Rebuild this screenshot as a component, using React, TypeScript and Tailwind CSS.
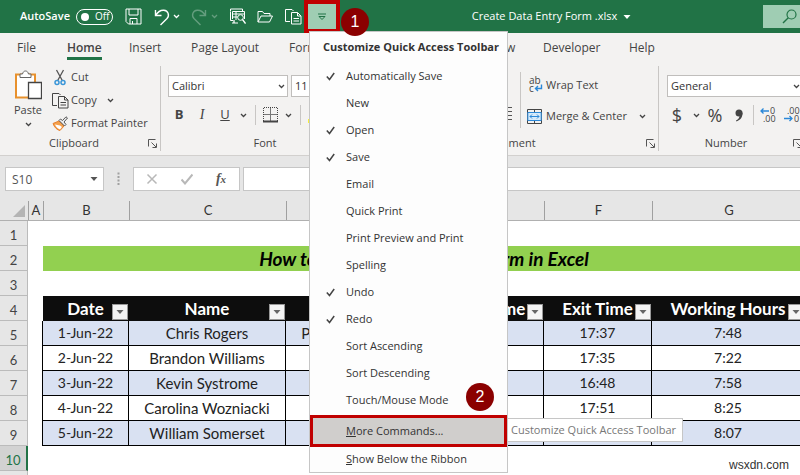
import { useState } from "react";
import type { ReactNode } from "react";

type MenuEntry = { label: string; checked?: boolean };

const menuEntries: MenuEntry[] = [
  { label: "Automatically Save", checked: true },
  { label: "New" },
  { label: "Open", checked: true },
  { label: "Save", checked: true },
  { label: "Email" },
  { label: "Quick Print" },
  { label: "Print Preview and Print" },
  { label: "Spelling" },
  { label: "Undo", checked: true },
  { label: "Redo", checked: true },
  { label: "Sort Ascending" },
  { label: "Sort Descending" },
  { label: "Touch/Mouse Mode" },
];

const tabs = [
  { label: "File", width: "w-[50px]" },
  { label: "Home", width: "w-[62px]" },
  { label: "Insert", width: "w-[62px]" },
  { label: "Page Layout", width: "w-[98px]" },
  { label: "Formulas", width: "w-[80px]" },
  { label: "Data", width: "w-[54px]" },
  { label: "Review", width: "w-[66px]" },
  { label: "View", width: "w-[54px]" },
  { label: "Developer", width: "w-[86px]" },
  { label: "Help", width: "w-[54px]" },
];

const columns = [
  { letter: "B", title: "Date" },
  { letter: "C", title: "Name" },
  { letter: "D", title: "Designation" },
  { letter: "E", title: "Entry Time" },
  { letter: "F", title: "Exit Time" },
  { letter: "G", title: "Working Hours" },
];

const records = [
  ["1-Jun-22", "Chris Rogers", "Project Manager", "9:49", "17:37", "7:48"],
  ["2-Jun-22", "Brandon Williams", "Accountant", "10:13", "17:35", "7:22"],
  ["3-Jun-22", "Kevin Systrome", "Developer", "8:50", "16:48", "7:58"],
  ["4-Jun-22", "Carolina Wozniacki", "Designer", "9:26", "17:51", "8:25"],
  ["5-Jun-22", "William Somerset", "Analyst", "9:10", "17:17", "8:07"],
];

export default function App() {
  return (
    <div className="relative flex h-screen flex-col overflow-hidden bg-white font-['Open_Sans',sans-serif] text-[11px] text-[#444]">
      <TitleBar />
      <Tabs />
      <Ribbon />
      <FormulaBar />
      <Sheet />
      <span className="absolute right-[11px] bottom-[2px] font-['Liberation_Sans',sans-serif] text-xs leading-4 text-[#333]">
        wsxdn.com
      </span>
    </div>
  );
}

function TitleBar() {
  const [autoSave, setAutoSave] = useState(false);

  return (
    <header className="flex h-[33px] shrink-0 items-center bg-[#217346] text-white">
      <label className="flex items-center gap-[7px] pl-5">
        <span className="w-[49px] font-semibold whitespace-nowrap">AutoSave</span>
        <input
          type="checkbox"
          className="sr-only"
          checked={autoSave}
          onChange={(e) => setAutoSave(e.target.checked)}
        />
        <span className="flex h-4 w-[37px] items-center gap-[6px] rounded-full border border-white pl-1 text-[10px]">
          <span className="h-2 w-2 rounded-full bg-white" />
          {autoSave ? "On" : "Off"}
        </span>
      </label>
      <div className="flex flex-1 items-center pl-3">
        <button aria-label="Save" className="w-[29px]">
          <SaveIcon />
        </button>
        <button aria-label="Undo" className="w-[19px]">
          <UndoIcon />
        </button>
        <button aria-label="Undo history" className="w-[18px]">
          <Chevron />
        </button>
        <button aria-label="Redo" className="w-5 opacity-30" disabled>
          <UndoIcon className="-scale-x-100" />
        </button>
        <button aria-label="Redo history" className="w-[18px] opacity-30" disabled>
          <Chevron />
        </button>
        <button aria-label="Print preview" className="w-[28px]">
          <PreviewIcon />
        </button>
        <button aria-label="Open" className="w-[28px]">
          <FolderIcon />
        </button>
        <button aria-label="Copy" className="w-[19px]">
          <CopyIcon />
        </button>
        <QuickAccess />
        <h1 className="flex flex-1 items-center justify-center gap-[6px] whitespace-nowrap">
          Create Data Entry Form .xlsx
          <Triangle className="text-white" />
        </h1>
      </div>
      <button
        aria-label="Search"
        className="flex h-[23px] w-[37px] items-center justify-center bg-[#9fcdb3] pl-4 text-[#217346]"
      >
        <svg width="15" height="15" viewBox="0 0 15 15" fill="none" stroke="currentColor">
          <circle cx="9.5" cy="5.5" r="4.5" strokeWidth="1.2" />
          <path d="M6.3 8.7 1 14" strokeWidth="1.4" />
        </svg>
      </button>
    </header>
  );
}

function QuickAccess() {
  return (
    <div className="relative z-10">
      <button
        aria-label="Customize Quick Access Toolbar"
        className="flex h-[33px] w-9 items-center justify-center border-4 border-[#c00000] bg-[#9fcdb3] text-[#217346]"
      >
        <svg width="8" height="8" viewBox="0 0 8 8" fill="none" stroke="currentColor">
          <path d="M0 1h8M1 3.5h6L4 6.5z" />
        </svg>
      </button>
      <div
        role="menu"
        className="absolute top-[31px] left-[5px] w-[199px] border border-[#c6c6c6] bg-[#fdfdfd] text-[#333]"
      >
        <h2 className="h-[31px] pl-[13px] leading-[30px] font-bold whitespace-nowrap">
          Customize Quick Access Toolbar
        </h2>
        {menuEntries.map((entry) => (
          <button
            key={entry.label}
            role="menuitemcheckbox"
            aria-checked={!!entry.checked}
            className="flex h-[27px] w-full items-center"
          >
            <span className="w-9 pl-4">{entry.checked && <CheckIcon />}</span>
            {entry.label}
          </button>
        ))}
        <div className="relative pt-px">
          <button
            role="menuitem"
            className="h-8 w-full border-[3px] border-[#c00000] bg-[#d0cecc] pl-[33px] text-left"
          >
            <u>M</u>ore Commands...
          </button>
          <Badge className="-top-[31px] left-[156px]">2</Badge>
          <div
            role="tooltip"
            className="absolute top-1 left-full h-6 w-[176px] border border-[#c6c6c6] bg-white pl-[3px] leading-[22px] whitespace-nowrap text-[#777]"
          >
            Customize Quick Access Toolbar
          </div>
        </div>
        <button role="menuitem" className="block h-[25px] w-full pl-9 text-left">
          <u>S</u>how Below the Ribbon
        </button>
      </div>
      <Badge className="top-2 left-[37px]">1</Badge>
    </div>
  );
}

function Badge({ className, children }: { className: string; children: ReactNode }) {
  return (
    <span
      className={`absolute flex h-7 w-7 items-center justify-center rounded-full bg-[#8b0000] font-['Liberation_Sans',sans-serif] text-base text-white ${className}`}
    >
      {children}
    </span>
  );
}

function Tabs() {
  return (
    <nav className="flex h-[33px] shrink-0 bg-[#f3f2f1] pl-[17px] text-xs">
      {tabs.map((tab) => (
        <a key={tab.label} href="#" className={`shrink-0 ${tab.width}`}>
          <span
            className={
              tab.label === "Home"
                ? "inline-block h-[27px] border-b-[3px] border-[#217346] leading-[30px] font-semibold"
                : "inline-block h-[27px] leading-[30px] whitespace-nowrap"
            }
          >
            {tab.label}
          </span>
        </a>
      ))}
    </nav>
  );
}

function Group({
  label,
  width,
  launcher,
  children,
}: {
  label: string;
  width: string;
  launcher?: boolean;
  children: ReactNode;
}) {
  return (
    <section className={`flex shrink-0 flex-col border-r border-[#c8c6c4] ${width}`}>
      <div className="h-[73px]">{children}</div>
      <div className="flex items-center pr-[3px] leading-4">
        <span className="flex-1 text-center">{label}</span>
        {launcher && (
          <button aria-label={`${label} settings`}>
            <LauncherIcon />
          </button>
        )}
      </div>
    </section>
  );
}

function Ribbon() {
  return (
    <div className="flex h-[90px] shrink-0 border-b border-[#d2d0ce] bg-[#f3f2f1] pb-1">
      <Group label="Clipboard" width="w-[161px]" launcher>
        <div className="flex">
          <button className="flex w-[52px] flex-col items-center pt-1 pl-1">
            <PasteIcon />
            <span className="mt-px leading-4">Paste</span>
            <Chevron className="mt-1" />
          </button>
          <div className="flex flex-col items-start">
            <button className="flex h-[23px] items-center">
              <CutIcon />
              <span className="pl-[2px]">Cut</span>
            </button>
            <button className="flex h-[23px] items-center">
              <CopyIcon className="text-[#444]" />
              <span className="pr-[10px] pl-[2px]">Copy</span>
              <Chevron />
            </button>
            <button className="flex h-[23px] items-center whitespace-nowrap">
              <BrushIcon />
              <span className="pl-[2px]">Format Painter</span>
            </button>
          </div>
        </div>
      </Group>

      <Group label="Font" width="w-[212px]">
        <div className="flex gap-[3px] pt-[9px] pl-[7px]">
          <SelectBox label="Font name" value="Calibri" width="w-[120px]" />
          <SelectBox label="Font size" value="11" width="w-12" />
        </div>
        <div className="mt-2 flex h-5 items-center pl-[7px]">
          <button className="w-[22px] text-[13px] font-bold">B</button>
          <button className="w-6 font-['Liberation_Serif',serif] text-sm italic">I</button>
          <button className="w-[22px] text-[13px] underline">U</button>
          <button aria-label="Underline style" className="w-[19px] pl-1">
            <Chevron />
          </button>
          <span className="h-5 border-l border-[#c8c6c4]" />
          <button aria-label="Borders" className="w-[29px] pl-[7px]">
            <BordersIcon />
          </button>
          <button aria-label="Border style" className="w-[15px]">
            <Chevron />
          </button>
          <span className="h-5 border-l border-[#c8c6c4]" />
          <button aria-label="Fill color" className="mt-3 ml-[7px] h-1 w-4 bg-[#f5f03c]" />
        </div>
      </Group>

      <Group label="Alignment" width="w-[286px]" launcher>
        <div className="flex justify-end">
          <div className="flex items-end pr-[8px] pb-[7px]">
            <svg width="14" height="15" viewBox="0 0 14 15" stroke="#555">
              <path d="M0 1.5h14M0 5.5h14M0 9.5h14M0 13.5h14" />
            </svg>
          </div>
          <div className="mt-[6px] flex h-[56px] w-[138px] flex-col items-start border-l border-[#c8c6c4] pl-[6px]">
            <button className="flex h-[26px] items-center gap-[3px] pl-[2px]">
              <WrapIcon />
              Wrap Text
            </button>
            <button className="mt-[6px] flex h-[24px] items-center gap-1 whitespace-nowrap">
              <MergeIcon />
              <span className="pr-[8px]">Merge &amp; Center</span>
              <Chevron />
            </button>
          </div>
        </div>
      </Group>

      <Group label="Number" width="w-[147px]" launcher>
        <div className="pt-[9px] pl-[8px]">
          <SelectBox label="Number format" value="General" width="w-[136px]" />
        </div>
        <div className="mt-2 flex h-5 items-center pl-[10px] text-lg">
          <button className="w-4">$</button>
          <button aria-label="Currency" className="w-5 pl-2">
            <Chevron />
          </button>
          <button className="w-5">%</button>
          <button aria-label="Comma style" className="w-7">
            <svg className="mx-auto" width="8" height="13" viewBox="0 0 8 13" fill="currentColor">
              <circle cx="4" cy="4" r="3.5" />
              <path d="M7.5 3.5C7.8 8 5.5 11 1.5 12.5L1 11.5C3.5 10.5 4.8 8.5 4.5 6z" />
            </svg>
          </button>
          <span className="h-5 border-l border-[#c8c6c4]" />
          <button aria-label="Increase decimal" className="w-6 pl-[6px]">
            <DecimalIcon />
          </button>
          <button aria-label="Decrease decimal" className="w-6 pl-[6px]">
            <DecimalIcon flip />
          </button>
        </div>
      </Group>
    </div>
  );
}

function SelectBox({ label, value, width }: { label: string; value: string; width: string }) {
  return (
    <div className={`relative ${width}`}>
      <select
        aria-label={label}
        className="block h-[22px] w-full appearance-none border border-[#c0bebc] bg-white pl-[3px] text-[11px] text-[#333]"
        defaultValue={value}
      >
        <option>{value}</option>
      </select>
      <Chevron className="pointer-events-none absolute top-[9px] right-[3px]" />
    </div>
  );
}

function FormulaBar() {
  return (
    <div className="flex h-[35px] shrink-0 items-end bg-[#e6e6e6] text-[#555]">
      <div className="relative ml-[5px] w-[99px]">
        <input
          aria-label="Name box"
          defaultValue="S10"
          className="block h-6 w-full border border-[#c6c6c6] bg-white pl-[6px] text-xs"
        />
        <Triangle className="pointer-events-none absolute top-[10px] right-[6px]" />
      </div>
      <svg className="mx-[13px] mb-[6px]" width="3" height="13" viewBox="0 0 3 13" fill="#a0a0a0">
        <path d="M.5.5h2v2h-2zM.5 4h2v2h-2zM.5 7.5h2v2h-2zM.5 11h2v2h-2z" />
      </svg>
      <div className="flex h-6 w-[107px] items-center border border-[#c6c6c6] bg-white">
        <button aria-label="Cancel" className="w-[35px] pl-3">
          <svg width="12" height="12" viewBox="0 0 12 12" stroke="#b8b8b8" strokeWidth="1.5">
            <path d="M1.5 1.5l9 9M10.5 1.5l-9 9" />
          </svg>
        </button>
        <button aria-label="Enter" className="w-[36px] pl-3">
          <svg width="12" height="12" viewBox="0 0 12 12" fill="none" stroke="#b8b8b8" strokeWidth="2">
            <path d="M.5 6.5l3.5 4L11.5 1.5" />
          </svg>
        </button>
        <button
          aria-label="Insert function"
          className="flex-1 pr-[2px] font-['Liberation_Serif',serif] text-sm leading-5 font-bold italic"
        >
          f<span className="text-[11px]">x</span>
        </button>
      </div>
      <input
        aria-label="Formula"
        className="ml-[3px] h-6 min-w-0 flex-1 border border-r-0 border-[#c6c6c6] bg-white"
      />
    </div>
  );
}

function RowHeader({ n }: { n: number }) {
  return (
    <th
      scope="row"
      className={
        n === 10
          ? "border-r-2 border-b border-[#217346] border-b-[#bbb] bg-[#d2d2d2] p-0 pt-1 text-[13px] leading-5 font-normal text-[#217346]"
          : "border-r border-b border-[#bbb] bg-[#e6e6e6] p-0 pt-1 text-[13px] leading-5 font-normal text-[#444]"
      }
    >
      {n}
    </th>
  );
}

function Sheet() {
  return (
    <table className="w-full min-w-[805px] table-fixed border-separate border-spacing-0 text-center font-[Lato,sans-serif] text-[15px] text-[#222]">
      <colgroup>
        <col className="w-7" />
        <col className="w-[15px]" />
        <col className="w-[86px]" />
        <col className="w-[157px]" />
        <col className="w-[140px]" />
        <col className="w-[118px]" />
        <col className="w-[108px]" />
        <col />
      </colgroup>
      <thead>
        <tr className="h-[30px] bg-[#e6e6e6] text-[13px] text-[#333]">
          <td className="border-b border-[#b0b0b0] p-0">
            <svg className="mt-[10px] ml-[13px]" width="12" height="12" viewBox="0 0 12 12" fill="#b4b4b4">
              <path d="M12 0v12H0z" />
            </svg>
          </td>
          <ColumnLetter letter="A" />
          {columns.map((c) => (
            <ColumnLetter key={c.letter} letter={c.letter} />
          ))}
        </tr>
      </thead>
      <tbody>
        <tr className="h-[25px]">
          <RowHeader n={1} />
          <td colSpan={7} />
        </tr>
        <tr className="h-[25px]">
          <RowHeader n={2} />
          <td />
          <td colSpan={6} className="bg-[#92d050] p-0 text-[19px] leading-5 font-bold text-black italic">
            How to Create a Data Entry Form in Excel
          </td>
        </tr>
        <tr className="h-[25px]">
          <RowHeader n={3} />
          <td colSpan={7} />
        </tr>
        <tr className="h-[25px]">
          <RowHeader n={4} />
          <td />
          {columns.map((c) => (
            <th key={c.letter} scope="col" className="bg-[#0d0d0d] p-0 text-[17px] leading-6 font-bold text-white">
              <div className="flex items-center pr-px pl-4">
                <span className="flex-1 whitespace-nowrap">{c.title}</span>
                <button
                  aria-label={`Filter ${c.title}`}
                  className="mt-[6px] flex h-4 w-4 shrink-0 items-center justify-center border border-[#999] bg-[#f4f4f4] text-[#555]"
                >
                  <Triangle />
                </button>
              </div>
            </th>
          ))}
        </tr>
        {records.map((record, i) => (
          <tr key={record[0]} className={i % 2 === 0 ? "h-[25px] bg-[#d9e1f2]" : "h-[25px]"}>
            <RowHeader n={i + 5} />
            <td className="border-r border-black bg-white p-0" />
            {record.map((value, j) => (
              <td
                key={columns[j].letter}
                className={
                  j === 1 || j === 2
                    ? "border-r border-b border-black p-0 leading-6"
                    : "border-r border-b border-black p-0 text-sm leading-6"
                }
              >
                {value}
              </td>
            ))}
          </tr>
        ))}
        {[10, 11].map((n) => (
          <tr key={n} className="h-[25px]">
            <RowHeader n={n} />
            <td colSpan={7} />
          </tr>
        ))}
      </tbody>
    </table>
  );
}

function ColumnLetter({ letter }: { letter: string }) {
  return (
    <th scope="col" className="border-b border-[#b0b0b0] p-0 align-bottom font-normal">
      <div className="mt-[10px] border-l border-[#a0a0a0] leading-[19px]">{letter}</div>
    </th>
  );
}

function Chevron({ className = "" }: { className?: string }) {
  return (
    <svg className={className} width="7" height="5" viewBox="0 0 7 5" fill="none" stroke="currentColor" strokeWidth="1.3">
      <path d="M1 1l2.500 2.500L6 1" />
    </svg>
  );
}

function Triangle({ className = "text-[#666]" }: { className?: string }) {
  return (
    <svg className={className} width="8" height="4" viewBox="0 0 8 4" fill="currentColor">
      <path d="M.5 0h7L4 4z" />
    </svg>
  );
}

const CheckIcon = () => (
  <svg width="9" height="9" viewBox="0 0 9 9" fill="none" stroke="#444" strokeWidth="1.5">
    <path d="M.8 4.5l2.700 3L8.200 1" />
  </svg>
);

const SaveIcon = () => (
  <svg width="17" height="17" viewBox="0 0 17 17" fill="none" stroke="currentColor">
    <path d="M1 1h15v15H3.500L1 13.500zM4 1v6h9V1M5 16v-5.500h7V16M7.500 16v-3" />
  </svg>
);

function UndoIcon({ className = "" }: { className?: string }) {
  return (
    <svg className={className} width="16" height="18" viewBox="0 0 16 18" fill="none" stroke="currentColor" strokeWidth="1.4">
      <path d="M1.500 2v5.500h6M1.800 7.200C4 3.500 7 2 9.800 2.200c4.500.4 6 5.300 3.200 8.300L6.500 17" />
    </svg>
  );
}

const PreviewIcon = () => (
  <svg width="17" height="17" viewBox="0 0 17 17" fill="none" stroke="currentColor">
    <path d="M4 12.500H1.500v-9M1.500 3V1h12v2M3.500 11V3.500h12V11M3.500 6h12M7 3.500V12M3.500 9H9M3 15h6" />
    <circle cx="11.5" cy="9.5" r="2.8" fill="#217346" />
    <path d="M13.500 11.500l3 4M5 12v3" strokeWidth="1.3" />
  </svg>
);

const FolderIcon = () => (
  <svg width="16" height="13" viewBox="0 0 16 13" fill="none" stroke="currentColor">
    <path d="M1 12V1.500h4.500L7 3.500h6V6M1 12l3-6h11.500l-3 6z" />
  </svg>
);

function CopyIcon({ className = "" }: { className?: string }) {
  return (
    <svg className={className} width="17" height="17" viewBox="0 0 17 17" fill="none" stroke="currentColor">
      <path d="M5 13.500H.5v-12H7l1.500 1.500M6.500 4.500h6l3.500 3.500v8H6.500zM12.500 4.500V8H16M8.500 10.500H14M8.500 13H14" />
    </svg>
  );
}

const PasteIcon = () => (
  <svg width="28" height="31" viewBox="0 0 28 31" fill="none">
    <path d="M2 4.500h19v23H2z" fill="#fff" stroke="#e8912d" strokeWidth="2" />
    <path d="M6 7.500V4h2.500C9 2 10 1 11.500 1S14 2 14.500 4H17v3.500z" fill="#fff" stroke="#666" />
    <path d="M14.500 12.500h13v16h-13z" fill="#fff" stroke="#444" strokeWidth="1.3" />
  </svg>
);

const CutIcon = () => (
  <svg width="17" height="17" viewBox="0 0 17 17" fill="none">
    <path d="M4.500 1l5.800 10.500M11.500 1L5.700 11.500" stroke="#555" strokeWidth="1.3" />
    <circle cx="5" cy="13.5" r="2" stroke="#3a96d8" strokeWidth="1.5" />
    <circle cx="11" cy="13.5" r="2" stroke="#3a96d8" strokeWidth="1.5" />
  </svg>
);

const BrushIcon = () => (
  <svg width="17" height="15" viewBox="0 0 17 15" fill="none">
    <path d="M1 7.500L7 5l5 5-4 4.500c-3-.5-5.500-3-7-7z" fill="#f4a04c" stroke="#e8812d" />
    <path d="M3 8.500l5 1 2 1.500-2 2.500c-2-.5-4-2.500-5-5z" fill="#fff" />
    <path d="M7 4.500l5.500 5.500L14 8.500l-2-2.500L15.500 2 14 .8 10.500 4.500 8.500 3z" fill="#eee" stroke="#555" />
  </svg>
);

const BordersIcon = () => (
  <svg width="15" height="16" viewBox="0 0 15 16" fill="none" stroke="#444">
    <path d="M.5 1v13M14.500 1v13M1 .5h14" strokeDasharray="1 1" />
    <path d="M7.500 1v13M1 7.500h13" stroke="#777" />
    <path d="M0 14.500h15" strokeWidth="2" />
  </svg>
);

const WrapIcon = () => (
  <svg className="overflow-visible" width="14" height="16" viewBox="0 0 14 16" fill="none">
    <text x="0" y="7" fontSize="10" fill="#444">
      ab
    </text>
    <text x="0" y="15" fontSize="10" fill="#444">
      c
    </text>
    <path d="M12.500 7.500v4H6.500M9 9l-2.500 2.500L9 14" stroke="#2b88d8" strokeWidth="1.4" />
  </svg>
);

const MergeIcon = () => (
  <svg width="15" height="15" viewBox="0 0 15 15" fill="none">
    <path d="M.5.5h14v14H.5zM7.500.5v3M7.500 11.500v3" stroke="#444" />
    <path d="M.8 3.500h13.400v8H.8z" fill="#d6eafa" stroke="#2b88d8" />
    <path d="M3 7.500h9M5 5.500l-2 2 2 2M10 5.500l2 2-2 2" stroke="#2b88d8" />
  </svg>
);

function DecimalIcon({ flip }: { flip?: boolean }) {
  return (
    <svg className="overflow-visible" width="17" height="16" viewBox="0 0 17 16" fill="none">
      <text x={flip ? 3 : 10} y="7" fontSize="9" fill="#444">
        {flip ? ".00" : "0"}
      </text>
      <text x={flip ? 10 : 3} y="15" fontSize="9" fill="#444">
        {flip ? "0" : ".00"}
      </text>
      <path
        d={flip ? "M0 11.500h8M5.500 9L8 11.500 5.500 14" : "M9 4H1M3.500 1.500L1 4l2.500 2.500"}
        stroke="#2b88d8"
        strokeWidth="1.3"
      />
    </svg>
  );
}

const LauncherIcon = () => (
  <svg width="9" height="9" viewBox="0 0 9 9" fill="none" stroke="#555">
    <path d="M.5 7.500v-7h7M3.500 3.500l4.500 4.500M8.500 4.500v4h-4" />
  </svg>
);
